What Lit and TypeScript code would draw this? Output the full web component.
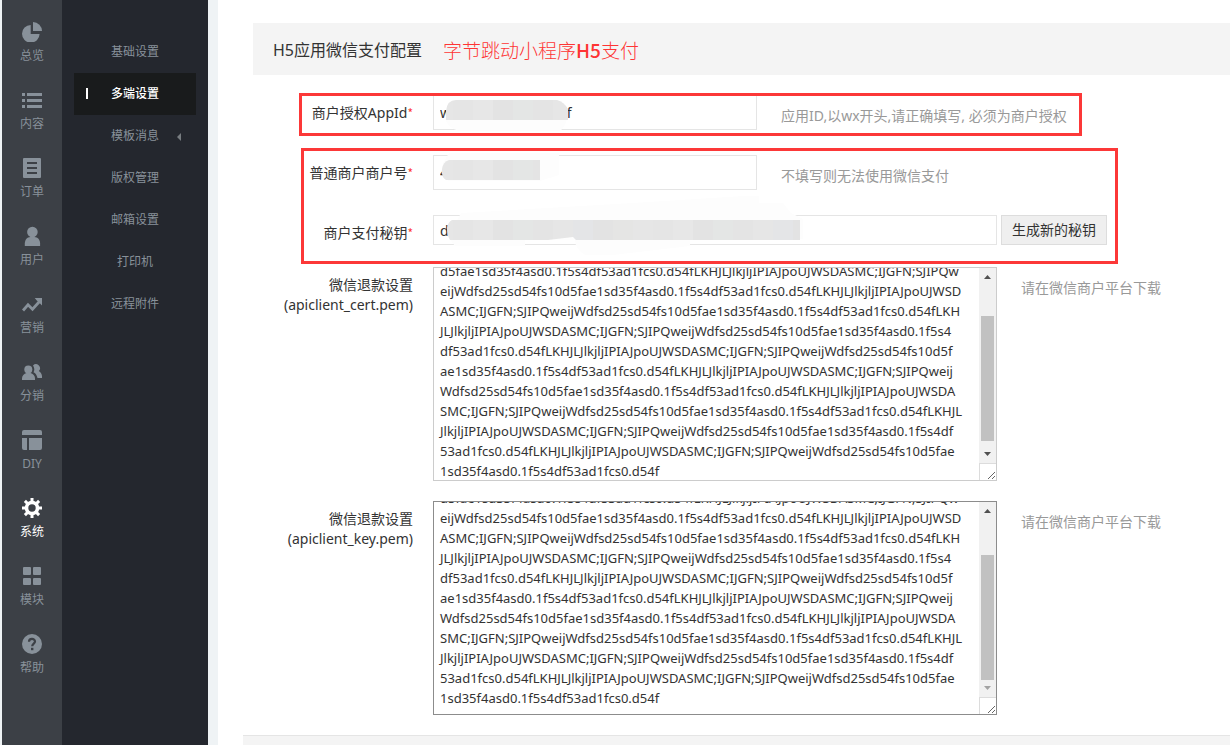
import { LitElement, html, css, svg, nothing } from "lit";
import { customElement, state } from "lit/decorators.js";
import { classMap } from "lit/directives/class-map.js";

const PEM = [
  "eijWdfsd25sd54fs10d5fae1sd35f4asd0.1f5s4df53ad1fcs0.d54fLKHJLJlkjljIPIAJpoUJW",
  "SDASMC;IJGFN;SJIPQweijWdfsd25sd54fs10",
  "d5fae1sd35f4asd0.1f5s4df53ad1fcs0.d54fLKHJLJlkjljIPIAJpoUJWSDASMC;IJGFN;SJIPQw",
  "eijWdfsd25sd54fs10d5fae1sd35f4asd0.1f5s4df53ad1fcs0.d54fLKHJLJlkjljIPIAJpoUJWSD",
  "ASMC;IJGFN;SJIPQweijWdfsd25sd54fs10d5fae1sd35f4asd0.1f5s4df53ad1fcs0.d54fLKH",
  "JLJlkjljIPIAJpoUJWSDASMC;IJGFN;SJIPQweijWdfsd25sd54fs10d5fae1sd35f4asd0.1f5s4",
  "df53ad1fcs0.d54fLKHJLJlkjljIPIAJpoUJWSDASMC;IJGFN;SJIPQweijWdfsd25sd54fs10d5f",
  "ae1sd35f4asd0.1f5s4df53ad1fcs0.d54fLKHJLJlkjljIPIAJpoUJWSDASMC;IJGFN;SJIPQweij",
  "Wdfsd25sd54fs10d5fae1sd35f4asd0.1f5s4df53ad1fcs0.d54fLKHJLJlkjljIPIAJpoUJWSDA",
  "SMC;IJGFN;SJIPQweijWdfsd25sd54fs10d5fae1sd35f4asd0.1f5s4df53ad1fcs0.d54fLKHJL",
  "JlkjljIPIAJpoUJWSDASMC;IJGFN;SJIPQweijWdfsd25sd54fs10d5fae1sd35f4asd0.1f5s4df",
  "53ad1fcs0.d54fLKHJLJlkjljIPIAJpoUJWSDASMC;IJGFN;SJIPQweijWdfsd25sd54fs10d5fae",
  "1sd35f4asd0.1f5s4df53ad1fcs0.d54f",
].join("\n");

const ICONS = {
  pie: svg`<path d="M8.700 3V12H17.600A8.800 8.800 0 1 1 8.700 3Z"/><path d="M11 0A9 9 0 0 1 20 9H11Z"/>`,
  list: svg`<path d="M0 3H3V6H0ZM5 3H20V6H5ZM0 9H3V12H0ZM5 9H20V12H5ZM0 15H3V18H0ZM5 15H20V18H5Z"/>`,
  order: svg`<path fill-rule="evenodd" d="M2 0H18a1 1 0 0 1 1 1V19a1 1 0 0 1-1 1H2a1 1 0 0 1-1-1V1a1 1 0 0 1 1-1ZM5 4V6H15V4ZM5 9V11H15V9ZM5 14V16H15V14Z"/>`,
  user: svg`<circle cx="10.400" cy="6" r="5.300"/><path d="M2.800 20V17.500c0-3.700 2.500-6.500 5.600-6.500H12.500c3.100 0 5.600 2.800 5.600 6.500V20Z"/>`,
  trend: svg`<path d="M1 16.500L6 10.800L10.500 15.300L17.500 7.500" fill="none" stroke="currentColor" stroke-width="2.800"/><path d="M12.700 4H20V11.500L17.800 9.300L15 6.700Z"/>`,
  users: svg`<g transform="translate(0 2)"><circle cx="6.300" cy="5.500" r="4"/><path d="M0 16V14.500C0 11.500 2 10 4.500 9H8.500C11 10 13 11.500 13 14.500V16Z"/><path d="M11 1.500A3.800 3.800 0 1 1 16.800 7C19 8.300 20.300 10.500 20 14H15.500C14.800 11 13.500 9 11.500 8.300C12.700 6.500 12.500 3.500 11 1.500Z"/></g>`,
  layout: svg`<path d="M0 5V2a2 2 0 0 1 2-2H18a2 2 0 0 1 2 2V5ZM0 8H5V20H2a2 2 0 0 1-2-2ZM7 8H20V18a2 2 0 0 1-2 2H7Z"/>`,
  gear: svg`<circle cx="10" cy="10" r="5.500" fill="none" stroke="currentColor" stroke-width="3.600"/><g stroke="currentColor" stroke-width="3"><path d="M10 0V4M10 16V20M0 10H4M16 10H20M2.900 2.900L5.500 5.500M14.500 14.500L17.100 17.100M2.900 17.100L5.500 14.500M14.500 5.500L17.100 2.900"/></g>`,
  grid: svg`<rect x="1" y="1" width="8" height="8" rx="1"/><rect x="11" y="1" width="8" height="8" rx="1"/><rect x="1" y="12" width="8" height="7" rx="1"/><rect x="11" y="12" width="8" height="7" rx="1"/>`,
  help: svg`<circle cx="10" cy="10" r="10"/><path d="M7 7.700C7 3.900 13 4 13 7.500C13 9.600 10.200 9.700 10.200 12.300" fill="none" stroke="#3c4046" stroke-width="2.200"/><rect x="9" y="13.800" width="2.400" height="2.400" fill="#3c4046"/>`,
};

const RAIL: { icon: keyof typeof ICONS; text: string; active?: boolean }[] = [
  { icon: "pie", text: "总览" },
  { icon: "list", text: "内容" },
  { icon: "order", text: "订单" },
  { icon: "user", text: "用户" },
  { icon: "trend", text: "营销" },
  { icon: "users", text: "分销" },
  { icon: "layout", text: "DIY" },
  { icon: "gear", text: "系统", active: true },
  { icon: "grid", text: "模块" },
  { icon: "help", text: "帮助" },
];

const MENU: { text: string; active?: boolean; more?: boolean }[] = [
  { text: "基础设置" },
  { text: "多端设置", active: true },
  { text: "模板消息", more: true },
  { text: "版权管理" },
  { text: "邮箱设置" },
  { text: "打印机" },
  { text: "远程附件" },
];

const GREYS = ["#e6e6e6", "#e5e5e5", "#e7e7e7", "#e3e3e3", "#e4e6e5", "#e4e4e4", "#e6e6e6", "#e4e5e7", "#e3e3e3", "#e5e5e4"];

/** Row of 20px censor blocks between two x positions. */
const blocks = (from: number, to: number, y: number) => {
  const out = [];
  for (let x = Math.floor(from / 20) * 20, i = 0; x < to; x += 20, i++) {
    const l = Math.max(x, from);
    out.push(svg`<rect x=${l} y=${y} width=${Math.min(x + 20, to) - l} height="20" fill=${GREYS[i % GREYS.length]}/>`);
  }
  return out;
};

const fieldStyles = css`
  * { box-sizing: border-box; }
  .row { display: flex; align-items: flex-start; }
  .label {
    flex: 0 0 160px;
    margin-right: 20px;
    padding-top: 8px;
    text-align: right;
    white-space: nowrap;
  }
  .control { position: relative; display: flex; flex: 0 1 564px; min-width: 0; }
  .help { padding: 11px 0 0 24px; color: #999; white-space: nowrap; }
`;

/** Form row: label, multi-line text box with a classic scroll bar, and a hint. */
@customElement("pem-row")
export class PemRow extends LitElement {
  static properties = {
    value: {},
    file: {},
    start: { type: Number },
    focused: { type: Boolean },
  };
  declare value: string;
  declare file: string;
  declare start: number;
  declare focused: boolean;

  @state() private thumbTop = 0;
  @state() private thumbHeight = 0;
  @state() private atEnd = false;

  static styles = [fieldStyles, css`
    :host { display: block; }
    .text {
      display: block;
      width: 100%;
      height: 214px;
      margin: 0;
      padding: 6px;
      border: 1px solid #ccc;
      border-radius: 0;
      background: #fff;
      font-family: "Noto Sans", "Noto Sans CJK SC", sans-serif;
      font-size: 13px;
      line-height: 20px;
      color: #333;
      white-space: pre;
      overflow-x: hidden;
      overflow-y: scroll;
      scrollbar-width: none;
      resize: vertical;
      outline: none;
    }
    .text.focused { border-color: #8c8c8c; }
    .bar {
      display: flex;
      flex-direction: column;
      position: absolute;
      top: 1px;
      right: 1px;
      bottom: 18px;
      width: 17px;
      background: #f1f1f1;
      pointer-events: none;
    }
    .arrow {
      display: block;
      flex: 0 0 17px;
      width: 17px;
      height: 17px;
      fill: #505050;
    }
    .arrow.off { fill: #a3a3a3; }
    .track { position: relative; flex: 1; }
    .thumb { position: absolute; left: 2px; right: 2px; background: #c1c1c1; }
    .corner {
      position: absolute;
      right: 1px;
      bottom: 1px;
      width: 17px;
      height: 17px;
      border: solid #dcdcdc;
      border-width: 1px 0 0 1px;
      pointer-events: none;
    }
  `];

  firstUpdated() {
    this.box.scrollTop = this.start;
    this.sync();
  }

  private get box() {
    return this.renderRoot.querySelector("textarea")!;
  }

  private sync() {
    const b = this.box;
    const track = this.renderRoot.querySelector<HTMLElement>(".track")!.clientHeight;
    const range = b.scrollHeight - b.clientHeight;
    this.thumbHeight = Math.round((track * b.clientHeight) / b.scrollHeight);
    this.thumbTop = range > 0 ? Math.floor(((track - this.thumbHeight) * b.scrollTop) / range) : 0;
    this.atEnd = b.scrollTop >= range - 1;
  }

  render() {
    return html`
      <div class="row">
        <label class="label" for="text">微信退款设置<br>(${this.file})</label>
        <div class="control">
          <textarea id="text" class=${classMap({ text: true, focused: this.focused })}
            spellcheck="false" .value=${this.value} @scroll=${this.sync}></textarea>
          <div class="bar">
            <svg class="arrow" viewBox="0 0 17 17"><path d="M8.500 7L12 11H5Z"/></svg>
            <div class="track"><div class="thumb" style="top:${this.thumbTop}px;height:${this.thumbHeight}px"></div></div>
            <svg class=${classMap({ arrow: true, off: this.atEnd })} viewBox="0 0 17 17"><path d="M5 6H12L8.500 10Z"/></svg>
          </div>
          <div class="corner"></div>
        </div>
        <div class="help">请在微信商户平台下载</div>
      </div>
    `;
  }
}

@customElement("app-root")
export class AppRoot extends LitElement {
  static styles = [fieldStyles, css`
    :host {
      display: block;
      font-family: "Noto Sans", "Noto Sans CJK SC", sans-serif;
      font-size: 14px;
      line-height: 20px;
      color: #333;
    }
    .app {
      display: flex;
      min-height: 100vh;
      padding-left: 2px;
      background: #eff3f5;
    }
    .rail { flex: 0 0 60px; padding-top: 12px; background: #3c4046; }
    .rail-item {
      display: flex;
      flex-direction: column;
      align-items: center;
      gap: 6px;
      height: 68px;
      padding-top: 10px;
      font-size: 12px;
      line-height: 16px;
      color: #88919a;
      text-decoration: none;
    }
    .rail-item svg { display: block; width: 20px; height: 20px; fill: currentColor; }
    .rail-item.active { color: #fff; }
    .menu { flex: 0 0 146px; padding: 31px 12px 0; background: #24272e; }
    .menu-item {
      display: block;
      position: relative;
      line-height: 42px;
      font-size: 12px;
      text-align: center;
      color: #88919a;
      text-decoration: none;
    }
    .menu-item.active { background: #191b1c; color: #fff; font-weight: 500; }
    .menu-item.active::before {
      content: "";
      position: absolute;
      left: 12px;
      top: 15px;
      width: 2px;
      height: 11px;
      background: #fff;
    }
    .caret {
      position: absolute;
      right: 15px;
      top: 18px;
      border: solid transparent;
      border-width: 4px 4px 4px 0;
      border-right-color: #777c80;
    }
    .main {
      display: flex;
      flex-direction: column;
      flex: 1;
      min-width: 0;
      margin-left: 10px;
      padding: 23px 0 0 35px;
      background: #fff;
      overflow: hidden;
    }
    .head {
      display: flex;
      align-items: center;
      gap: 21px;
      height: 52px;
      padding: 2px 20px 0;
      background: #f4f4f4;
      white-space: nowrap;
    }
    .title { margin: 0; font-size: 16px; font-weight: 400; }
    .note { font-size: 19px; font-weight: 300; color: #fe3434; }
    .note b { font-family: "Noto Sans CJK SC", sans-serif; font-weight: 500; }
    .form { padding: 20px 0; }
    .group { position: relative; margin-bottom: 25px; }
    .group.last { margin-bottom: 22px; }
    .row + .row { margin-top: 25px; }
    pem-row + pem-row { margin-top: 20px; }
    .req { font-family: "Noto Sans CJK SC", sans-serif; font-size: 12px; line-height: 1; color: #fe3434; }
    .control.short { flex-basis: 324px; }
    .input {
      width: 100%;
      height: 35px;
      padding: 0 6px;
      border: 1px solid #e5e5e5;
      border-radius: 0;
      background: #fff;
      font: inherit;
      color: inherit;
      outline: none;
    }
    .input.low { height: 30px; }
    .mask {
      position: absolute;
      left: 0;
      top: -20px;
      width: 400px;
      height: 70px;
      pointer-events: none;
    }
    .button {
      height: 30px;
      margin-left: 4px;
      padding: 0 10px;
      border: 1px solid #ddd;
      background: #efefef;
      font: inherit;
      color: inherit;
      white-space: nowrap;
    }
    .frame { position: absolute; border: 3px solid #fc3838; pointer-events: none; }
    .frame.one { left: 46px; top: -2px; bottom: -6px; width: 783px; }
    .frame.two { left: 48px; top: -7px; bottom: -19px; width: 817px; }
    .foot {
      flex: 1 0 10px;
      margin-left: -10px;
      border-top: 1px solid #e5e5e5;
      background: #f4f4f4;
    }
  `];

  render() {
    return html`
      <div class="app">
        <nav class="rail">
          ${RAIL.map((r) => html`
            <a href="#" class=${classMap({ "rail-item": true, active: !!r.active })}>
              <svg viewBox="0 0 20 20" aria-hidden="true">${ICONS[r.icon]}</svg>
              <span>${r.text}</span>
            </a>`)}
        </nav>
        <nav class="menu">
          ${MENU.map((m) => html`
            <a href="#" class=${classMap({ "menu-item": true, active: !!m.active })}>${m.text}${m.more ? html`<i class="caret"></i>` : nothing}</a>`)}
        </nav>
        <main class="main">
          <header class="head">
            <h1 class="title">H5应用微信支付配置</h1>
            <span class="note">字节跳动小程序<b>H5</b>支付</span>
          </header>
          <form class="form">
            <div class="group">
              <div class="row">
                <label class="label" for="appid">商户授权AppId<span class="req">*</span></label>
                <div class="control short">
                  <input class="input" id="appid" .value=${"w" + "\u2003".repeat(8) + "\u00a0f"}>
                  <svg class="mask" aria-hidden="true">
                    <defs><clipPath id="c1"><path d="M13 60V36Q14 25 23 25H124Q131 27 135 34V60Z"/></clipPath></defs>
                    <path d="M12 44H134Q132 52 127 56H26Q15 53 12 44Z" fill="#fdfdfd"/>
                    <g clip-path="url(#c1)">${blocks(13, 135, 25)}</g>
                  </svg>
                </div>
                <div class="help">应用ID,以wx开头,请正确填写, 必须为商户授权</div>
              </div>
              <div class="frame one"></div>
            </div>
            <div class="group last">
              <div class="row">
                <label class="label" for="mchid">普通商户商户号<span class="req">*</span></label>
                <div class="control short">
                  <input class="input" id="mchid" .value=${"4"}>
                  <svg class="mask" aria-hidden="true">
                    <defs><clipPath id="c2"><path d="M16 25H107V45H13Q8 42 9 34Q10 27 16 25Z"/></clipPath></defs>
                    <path d="M16 18H126V40L107 46H16L10 42V28Z" fill="#fdfdfd"/>
                    <g clip-path="url(#c2)">${blocks(8, 107, 25)}</g>
                  </svg>
                </div>
                <div class="help">不填写则无法使用微信支付</div>
              </div>
              <div class="row">
                <label class="label" for="key">商户支付秘钥<span class="req">*</span></label>
                <div class="control">
                  <input class="input low" id="key" .value=${"d"}>
                  <svg class="mask" aria-hidden="true">
                    <defs><clipPath id="c3"><path d="M19 25H367V45H143L140 42L115 45H17Q14 40 14 33Q15 27 19 25Z"/></clipPath></defs>
                    <path d="M28 18L200 8L310 1H326V8H350L358 18L370 24V44H257V51L180 60H152Q142 54 142 45H92V51H22L15 42Z" fill="#fdfdfd"/>
                    <g clip-path="url(#c3)">${blocks(14, 367, 25)}</g>
                  </svg>
                </div>
                <button class="button" type="button">生成新的秘钥</button>
              </div>
              <div class="frame two"></div>
            </div>
            <pem-row file="apiclient_cert.pem" .value=${PEM} .start=${53}></pem-row>
            <pem-row file="apiclient_key.pem" .value=${PEM} .start=${60} .focused=${true}></pem-row>
          </form>
          <div class="foot"></div>
        </main>
      </div>
    `;
  }
}
